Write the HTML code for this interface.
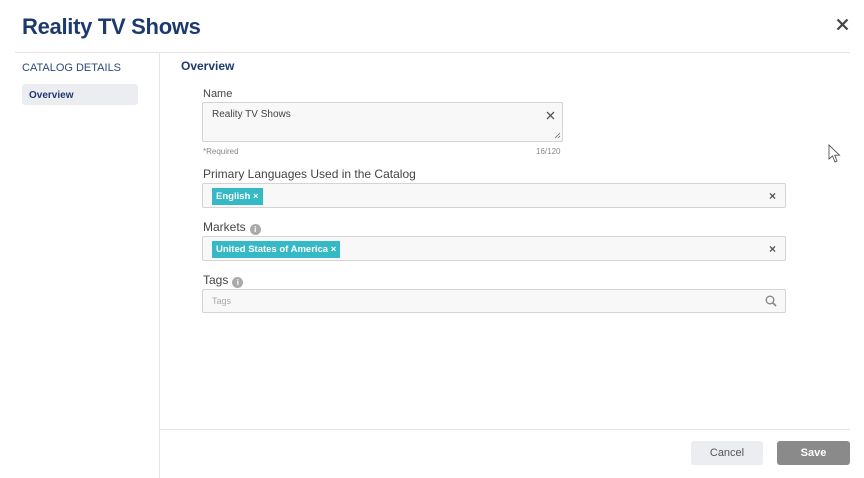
<!DOCTYPE html>
<html><head><style>
*{box-sizing:border-box;margin:0;padding:0}
body{width:864px;height:478px;background:#fff;font-family:"Liberation Sans",sans-serif;position:relative;overflow:hidden;color:#333}
.a{position:absolute}
h1{position:absolute;left:22px;top:14px;font-size:22px;font-weight:bold;color:#1d3a6e;letter-spacing:-0.3px}
.lbl{position:absolute;left:203px;font-size:12px;color:#444}
.box{position:absolute;left:202px;width:584px;background:#f8f8f8;border:1px solid #d4d4d4;border-radius:2px}
.chip{position:absolute;background:#35b9c4;color:#fff;font-size:9.5px;font-weight:bold;padding:0 4px;height:17px;line-height:17px;top:4px;left:9px}
.x{position:absolute;right:9px;font-size:12px;color:#555;font-weight:bold}
.info{display:inline-block;width:11px;height:11px;border-radius:50%;background:#aaa;color:#fff;font-size:8px;text-align:center;line-height:11px;font-weight:bold;vertical-align:-1px;margin-left:4px}
</style></head><body>
<h1>Reality TV Shows</h1>
<svg class="a" style="left:836px;top:18px" width="13" height="13"><path d="M1.5 1.5L11.5 11.5M11.5 1.5L1.5 11.5" stroke="#444" stroke-width="2.2"/></svg>
<div class="a" style="left:15px;top:52px;width:835px;height:1px;background:#e4e4e4"></div>
<div class="a" style="left:159px;top:53px;width:1px;height:425px;background:#e4e4e4"></div>
<div class="a" style="left:160px;top:429px;width:690px;height:1px;background:#e4e4e4"></div>
<div class="a" style="left:22px;top:62px;font-size:11px;color:#2d4a78">CATALOG DETAILS</div>
<div class="a" style="left:22px;top:84px;width:116px;height:21px;background:#ecedf1;border-radius:3px;font-size:10px;font-weight:bold;color:#1d3a6e;padding:6px 0 0 7px">Overview</div>
<div class="a" style="left:181px;top:59px;font-size:12px;font-weight:bold;color:#1d3a6e">Overview</div>
<div class="lbl" style="top:88px;font-size:11px">Name</div>
<div class="box" style="top:102px;width:361px;height:40px">
<div class="a" style="left:9px;top:6px;font-size:10px;color:#444">Reality TV Shows</div>
<svg class="a" style="left:343px;top:8px" width="9" height="9"><path d="M1 1L8 8M8 1L1 8" stroke="#555" stroke-width="1.3"/></svg>
<svg class="a" style="left:351px;top:29px" width="7" height="7"><path d="M6 1L1 6M6 4L4 6" stroke="#666" stroke-width="0.8"/></svg>
</div>
<div class="a" style="left:203px;top:147px;font-size:8px;color:#888">*Required</div>
<div class="a" style="left:536px;top:147px;font-size:8px;color:#888">16/120</div>
<div class="lbl" style="top:167px">Primary Languages Used in the Catalog</div>
<div class="box" style="top:183px;height:25px"><div class="chip">English ×</div><span class="x" style="top:5px">×</span></div>
<div class="lbl" style="top:220px">Markets<span class="info">i</span></div>
<div class="box" style="top:236px;height:25px"><div class="chip">United States of America ×</div><span class="x" style="top:5px">×</span></div>
<div class="lbl" style="top:273px">Tags<span class="info">i</span></div>
<div class="box" style="top:289px;height:24px"><div class="a" style="left:9px;top:6px;font-size:9px;color:#aaa">Tags</div>
<svg class="a" style="right:8px;top:5px" width="12" height="12"><circle cx="5" cy="5" r="3.8" stroke="#888" stroke-width="1.4" fill="none"/><path d="M8 8L11 11" stroke="#888" stroke-width="1.6"/></svg></div>
<div class="a" style="left:691px;top:441px;width:72px;height:24px;background:#ecedf1;border-radius:3px;font-size:11px;color:#555;text-align:center;line-height:24px">Cancel</div>
<div class="a" style="left:777px;top:441px;width:73px;height:24px;background:#8a8a8a;border-radius:3px;font-size:11px;color:#fff;font-weight:bold;text-align:center;line-height:24px">Save</div>
<svg class="a" style="left:828px;top:144px" width="14" height="20"><path d="M1 1L1 15L4.5 12L7 18L9 17L6.7 11.2L11.5 11.2Z" fill="#fff" stroke="#555" stroke-width="0.9"/></svg>
</body></html>
